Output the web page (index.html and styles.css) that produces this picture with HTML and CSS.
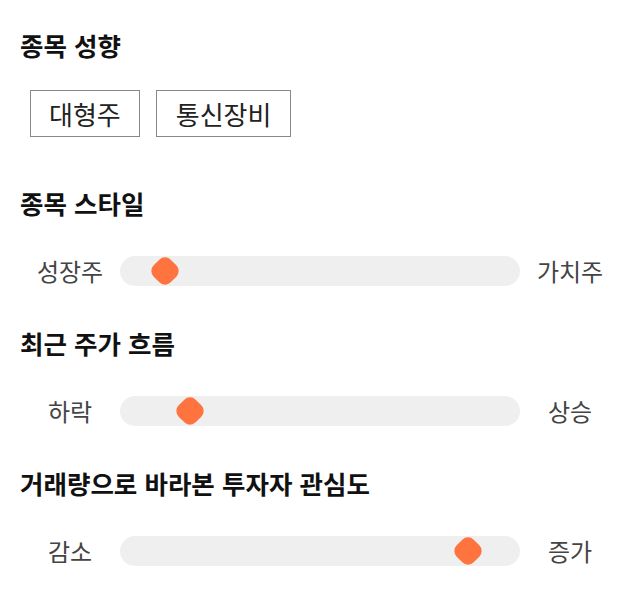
FILE: index.html
```html
<!DOCTYPE html>
<html lang="ko">
<head>
<meta charset="utf-8">
<link rel="stylesheet" href="styles.css">
</head>
<body>
<div class="page">
  <section class="section section-tags">
    <h2 class="title">종목 성향</h2>
    <div class="tags">
      <span class="tag">대형주</span>
      <span class="tag">통신장비</span>
    </div>
  </section>

  <section class="section">
    <h2 class="title">종목 스타일</h2>
    <div class="slider-row">
      <span class="label">성장주</span>
      <div class="track"><span class="thumb" style="left: 11.3%"></span></div>
      <span class="label">가치주</span>
    </div>
  </section>

  <section class="section">
    <h2 class="title">최근 주가 흐름</h2>
    <div class="slider-row">
      <span class="label">하락</span>
      <div class="track"><span class="thumb" style="left: 17.6%"></span></div>
      <span class="label">상승</span>
    </div>
  </section>

  <section class="section">
    <h2 class="title">거래량으로 바라본 투자자 관심도</h2>
    <div class="slider-row">
      <span class="label">감소</span>
      <div class="track"><span class="thumb" style="left: 87.1%"></span></div>
      <span class="label">증가</span>
    </div>
  </section>
</div>
</body>
</html>
```

FILE: styles.css
```css
html, body {
  margin: 0;
  padding: 0;
  background: #ffffff;
}

body {
  font-family: "Noto Sans CJK KR", "Noto Sans", sans-serif;
  color: #111111;
}

.page {
  padding: 29px 20px 0 20px;
  display: flex;
  flex-direction: column;
}

.section {
  display: flex;
  flex-direction: column;
  gap: 37px;
  margin-bottom: 41px;
}

.section-tags {
  gap: 29px;
  margin-bottom: 50px;
}

.title {
  margin: 0;
  font-size: 25.5px;
  line-height: 32px;
  font-weight: 700;
  color: #111111;
}

.tags {
  display: flex;
  gap: 16px;
  padding-left: 10px;
}

.tag {
  display: inline-block;
  border: 1px solid #888888;
  padding: 10px 18px;
  font-size: 26px;
  line-height: 25px;
  color: #222222;
}

.tag + .tag {
  padding: 10px 19px;
}

.slider-row {
  display: flex;
  align-items: center;
  height: 30px;
}

.label {
  width: 100px;
  flex: none;
  text-align: center;
  font-size: 24px;
  line-height: 30px;
  color: #444444;
}

.track {
  position: relative;
  flex: 1;
  height: 30px;
  border-radius: 15px;
  background: #efefef;
}

.thumb {
  position: absolute;
  top: 50%;
  width: 24px;
  height: 24px;
  border-radius: 8px;
  background: #ff733f;
  transform: translate(-50%, -50%) rotate(45deg);
}
```
